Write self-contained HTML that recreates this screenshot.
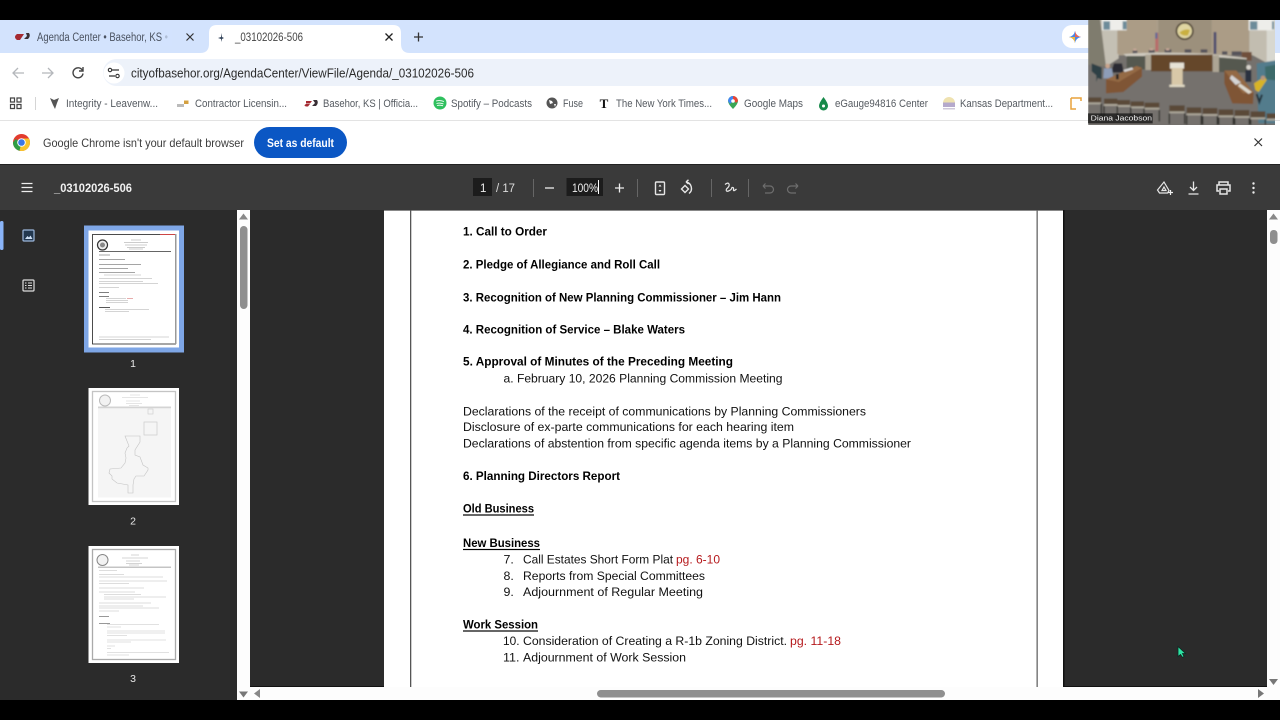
<!DOCTYPE html>
<html><head><meta charset="utf-8"><title>_03102026-506</title>
<style>
html,body{margin:0;padding:0;background:#000;width:1280px;height:720px;overflow:hidden}
svg{display:block;position:absolute;left:0;top:0}
#root{filter:blur(.3px)}
text{font-family:"Liberation Sans",sans-serif}
.t{font-size:11px;fill:#555a60}
.d{font-size:12.4px;fill:#111}
.b{font-size:12.4px;fill:#000;font-weight:bold}
.r{font-size:12.4px;fill:#b5191c}
.i{fill:none;stroke:#e6e6e6;stroke-width:1.4}
.l{stroke:#888;stroke-width:.7}
.m{stroke:#bbb;stroke-width:.6}
</style></head><body>
<svg id="root" width="1280" height="720" viewBox="0 0 1280 720" xmlns="http://www.w3.org/2000/svg">
<defs>
<filter id="bl" x="-5%" y="-5%" width="110%" height="110%"><feGaussianBlur stdDeviation="2"/></filter>
<filter id="th" x="-5%" y="-5%" width="110%" height="110%"><feGaussianBlur stdDeviation=".35"/></filter>
</defs>
<rect width="1280" height="720" fill="#000"/>
<!-- tab strip -->
<rect y="20" width="1280" height="33" fill="#d3e3fd"/>
<path d="M200 53q9 0 9-9V33q0-8 8-8h176q8 0 8 8v11q0 9 9 9z" fill="#fff"/>
<path d="M17 34h7l-2 3h-5zM17 37h5l-2 3h-3q-4-3 0-6z" fill="#a52a32"/><path d="M26 33h3q2 3-1 6h-4l3-3z" fill="#3a3036"/>
<text x="37" y="41" class="t" style="fill:#4a5260;font-size:11.5px" textLength="131" lengthAdjust="spacingAndGlyphs">Agenda Center • Basehor, KS •</text>
<rect x="162" y="28" width="10" height="18" fill="#d3e3fd" opacity=".75"/>
<path d="M186.500 33.500l7 7m0-7l-7 7" stroke="#333" stroke-width="1.200"/>
<path d="M222 33l-1 4-3 1 3 1 1 3 0-3 2-1-2-1z" fill="#33445a"/>
<text x="235" y="41" class="t" style="fill:#444;font-size:11.5px" textLength="68" lengthAdjust="spacingAndGlyphs">_03102026-506</text>
<path d="M385.500 33.500l7 7m0-7l-7 7" stroke="#222" stroke-width="1.300"/>
<path d="M418.500 32.500v9m-4.500-4.500h9" stroke="#333" stroke-width="1.300"/>
<rect x="1062" y="25" width="40" height="23" rx="10" fill="#fff"/>
<path d="M1075 31q1 5 6 6q-5 1-6 6q-1-5-6-6q5-1 6-6z" fill="#4a86e8"/>
<path d="M1075 31q1 5 6 6h-6z" fill="#e6655a"/>
<path d="M1075 43q-1-5-6-6h6z" fill="#f0b840"/>
<!-- toolbar -->
<rect y="53" width="1280" height="67" fill="#fff"/>
<rect x="103" y="59" width="1100" height="27" rx="13.500" fill="#edf2fa"/>
<path d="M24 73H13m5-5l-5 5 5 5" fill="none" stroke="#b4b7bb" stroke-width="1.300"/>
<path d="M42 73h11m-5-5l5 5-5 5" fill="none" stroke="#b4b7bb" stroke-width="1.300"/>
<path d="M82.500 70.500a5 5 0 1 0 .5 3M83 67v4h-4" fill="none" stroke="#444" stroke-width="1.400"/>
<circle cx="114" cy="73" r="10.500" fill="#fff"/>
<path d="M112 70h7M109 76h6" stroke="#333" stroke-width="1.200"/><circle cx="110" cy="70" r="1.700" fill="none" stroke="#333" stroke-width="1.100"/><circle cx="117.500" cy="76" r="1.700" fill="none" stroke="#333" stroke-width="1.100"/>
<text x="131" y="77.500" style="font-size:12.500px;fill:#2b2b2b" textLength="343" lengthAdjust="spacingAndGlyphs">cityofbasehor.org/AgendaCenter/ViewFile/Agenda/_03102026-506</text>
<!-- bookmarks -->
<rect y="120" width="1280" height="1" fill="#e3e3e3"/>
<path d="M10.500 98h4v4h-4zM17 98h4v4h-4zM10.500 104.500h4v4h-4zM17 104.500h4v4h-4z" fill="none" stroke="#444" stroke-width="1.200"/>
<rect x="35" y="97" width="1" height="13" fill="#d5d5d5"/>
<path d="M50 98l4 2 5-2-2 5-2 6-2-4z" fill="#555"/>
<text x="66" y="107" class="t" textLength="92" lengthAdjust="spacingAndGlyphs">Integrity - Leavenw...</text>
<path d="M177 104h7v3h-7z" fill="#bbb"/><rect x="184" y="100.500" width="4.500" height="3.500" fill="#d4a040"/>
<text x="195" y="107" class="t" textLength="92" lengthAdjust="spacingAndGlyphs">Contractor Licensin...</text>
<path d="M306 101h6l-2 2.500h-4zM306 104h4l-2 2.500h-2q-3-1 0-2.500z" fill="#a52a32"/><path d="M313 100h4q2 3-1 6h-4l3-3z" fill="#3a3036"/>
<text x="323" y="107" class="t" textLength="95" lengthAdjust="spacingAndGlyphs">Basehor, KS | Officia...</text>
<circle cx="440" cy="103" r="6.500" fill="#2fc05e"/><path d="M436 101q4-1 8 .5M436.500 103.500q3.500-1 7 .5M437 105.500q3-.8 6 .3" stroke="#fff" stroke-width=".9" fill="none"/>
<text x="451" y="107" class="t" textLength="81" lengthAdjust="spacingAndGlyphs">Spotify – Podcasts</text>
<circle cx="552" cy="103" r="5.500" fill="#555"/><path d="M549 100l3 1 1 2-3 1zM554 104l2 0-1 3z" fill="#fff"/>
<text x="563" y="107" class="t" textLength="20" lengthAdjust="spacingAndGlyphs">Fuse</text>
<text x="604" y="108" text-anchor="middle" style="font-family:'Liberation Serif',serif;font-size:13px;font-weight:bold;fill:#111">T</text>
<text x="616" y="107" class="t" textLength="96" lengthAdjust="spacingAndGlyphs">The New York Times...</text>
<path d="M733 109q-5-5-5-8a5 5 0 0 1 10 0q0 3-5 8z" fill="#3aa757"/><path d="M728 101a5 5 0 0 1 5-5l3 2-6 6z" fill="#4285f4"/><path d="M733 96a5 5 0 0 1 5 5l-2 2-3-4z" fill="#ea4335"/><circle cx="733" cy="101" r="1.800" fill="#fff"/>
<text x="744" y="107" class="t" textLength="59" lengthAdjust="spacingAndGlyphs">Google Maps</text>
<path d="M823.500 97q4.500 6 4.500 9a4.500 4.500 0 0 1-9 0q0-3 4.500-9z" fill="#178a4a"/><circle cx="823.500" cy="106" r="1.500" fill="#fff"/>
<text x="835" y="107" class="t" textLength="93" lengthAdjust="spacingAndGlyphs">eGauge94816 Center</text>
<path d="M943 103a6 6 0 0 1 12 0" fill="#efe2b0"/><rect x="943" y="102.500" width="12" height="4.500" fill="#b5a9cc"/><rect x="943" y="108" width="12" height="1.500" fill="#cfc8da"/>
<text x="960" y="107" class="t" textLength="93" lengthAdjust="spacingAndGlyphs">Kansas Department...</text>
<path d="M1071 98h10v3m-10-3v11h5" fill="none" stroke="#e8a23c" stroke-width="1.500"/>
<!-- infobar -->
<rect y="121" width="1280" height="43" fill="#fff"/>
<circle cx="21.500" cy="142.500" r="8.500" fill="#e33b2e"/>
<path d="M13 142.500a8.500 8.500 0 0 0 6.500 8.300l4-7-2-1.300-6-3.500z" fill="#2f9e44"/>
<path d="M21.500 142.500l-2 8.300a8.500 8.500 0 0 0 10.500-8.300q0-2-1-4h-7.500z" fill="#f7c52d"/>
<circle cx="21.500" cy="142.500" r="4.300" fill="#fff"/><circle cx="21.500" cy="142.500" r="3.300" fill="#3b78e7"/>
<text x="43" y="147" style="font-size:12px;fill:#3c3c3c" textLength="201" lengthAdjust="spacingAndGlyphs">Google Chrome isn't your default browser</text>
<rect x="254" y="127" width="93" height="31" rx="15.500" fill="#0b57c4"/>
<text x="267" y="147" style="font-size:11.500px;fill:#fff;font-weight:bold" textLength="67" lengthAdjust="spacingAndGlyphs">Set as default</text>
<path d="M1254.500 138.500l7.500 7.500m0-7.500l-7.500 7.500" stroke="#333" stroke-width="1.200"/>
<!-- pdf toolbar -->
<rect y="164" width="1280" height="46" fill="#3a3a3a"/>
<rect y="164" width="1280" height="1" fill="#222"/>
<path d="M21.500 183.500h11M21.500 187.500h11M21.500 191.500h11" stroke="#eee" stroke-width="1.200"/>
<text x="54" y="192" style="font-size:11.500px;fill:#f0f0f0;font-weight:bold" textLength="78" lengthAdjust="spacingAndGlyphs">_03102026-506</text>
<rect x="473" y="178" width="19" height="18" fill="#1c1c1c"/>
<text x="480" y="192" style="font-size:11.500px;fill:#eee">1</text>
<text x="496" y="192" style="font-size:11.500px;fill:#ddd" textLength="19" lengthAdjust="spacingAndGlyphs">/ 17</text>
<rect x="533" y="179" width="1" height="18" fill="#666"/>
<path d="M545 188h9" stroke="#eee" stroke-width="1.300"/>
<rect x="566.500" y="178" width="36.500" height="18" fill="#1c1c1c"/>
<text x="572" y="192" style="font-size:11.500px;fill:#eee" textLength="26" lengthAdjust="spacingAndGlyphs">100%</text>
<rect x="598" y="180" width="1" height="14" fill="#fff"/>
<path d="M615 188h9m-4.500-4.500v9" stroke="#eee" stroke-width="1.300"/>
<rect x="637" y="179" width="1" height="18" fill="#666"/>
<rect x="655.500" y="182" width="9" height="12.500" rx="1" class="i"/><path d="M660 184.500l-1.500 2h3zM660 192l-1.500-2h3z" fill="#eee"/>
<path d="M681.500 189l3.500-3.500 3.500 3.500-3.500 3.500z" class="i"/><path d="M686 182a6.500 6.500 0 0 1 3 11.500M686 182l2.500-2.200M686 182l2.500 2" class="i"/>
<rect x="711" y="179" width="1" height="18" fill="#666"/>
<path d="M725 184.500q3-2.500 4-.5t-2.500 5q-1 3 2 2t3.500-3.500q2-.5 1.500 2t3-.5" class="i" style="stroke-width:1.200"/>
<rect x="748" y="179" width="1" height="18" fill="#666"/>
<path d="M763 186h7a3.500 3.500 0 0 1 0 7h-5M763 186l2.500-2.500M763 186l2.500 2.500" class="i" style="stroke:#6e6e6e;stroke-width:1.200"/>
<path d="M798 186h-7a3.500 3.500 0 0 0 0 7h5M798 186l-2.500-2.500M798 186l-2.500 2.500" class="i" style="stroke:#6e6e6e;stroke-width:1.200"/>
<path d="M1164 182l5 8.500-1.500 2.500h-8l-2-3zM1164 187l2 3.500h-4z" class="i" style="stroke-width:1.200"/><path d="M1168 192.500h5m-2.500-2.500v5" stroke="#eee" stroke-width="1.200"/>
<path d="M1193.500 181.500v9m-3.500-3.500l3.500 3.500 3.500-3.500M1188.500 194h10" class="i" style="stroke-width:1.300"/>
<path d="M1219 185v-3h9v3M1219 191h-2v-6h13v6h-2M1220 189h7v5h-7z" class="i" style="stroke-width:1.500"/>
<circle cx="1253.500" cy="183.500" r="1.200" fill="#eee"/><circle cx="1253.500" cy="188" r="1.200" fill="#eee"/><circle cx="1253.500" cy="192.500" r="1.200" fill="#eee"/>
<!-- main -->
<rect y="210" width="1280" height="490" fill="#2b2b2b"/>
<rect x="0" y="221" width="3.500" height="29" rx="1.500" fill="#8ab4f8"/>
<rect x="23" y="230" width="11" height="11" rx="1" fill="#23384f" stroke="#9db8dc" stroke-width="1.200"/><path d="M25 239l2.500-3 1.500 1.500 1.500-2 2 3.500z" fill="#cfe0f5"/>
<rect x="23" y="280" width="11" height="11" rx="1" fill="none" stroke="#ddd" stroke-width="1.200"/><path d="M25 283h1.500M28 283h4M25 285.500h1.500M28 285.500h4M25 288h1.500M28 288h4" stroke="#ddd"/>
<!-- thumb 1 -->
<rect x="84" y="225.500" width="100" height="127" fill="#7ea6e6"/>
<rect x="88.500" y="230.500" width="90.500" height="117" fill="#fff"/>
<g filter="url(#th)">
<rect x="92.500" y="234.500" width="83" height="109.500" fill="none" stroke="#222" stroke-width=".8"/>
<rect x="175" y="234" width="1.500" height="110" fill="#999"/>
<rect x="160" y="234" width="15" height="1" fill="#c44"/>
<circle cx="102.500" cy="245" r="5" fill="#eee" stroke="#333" stroke-width="1.200"/><circle cx="102.500" cy="245" r="2.500" fill="#888"/>
<path d="M131 240h10M124 242.500h24M125 245h22M127 247.500h18M129 249h14" class="m" style="stroke:#999"/>
<path d="M99 251.500h72" stroke="#333" stroke-width=".8"/>
<path d="M99 255h11M99 259.500h26M99 264.500h42M99 268.500h29M99 272.500h36" class="l"/>
<path d="M104 275h37M99 278.500h53M99 281.500h44M99 283.500h59M99 287.500h20" class="m" style="stroke:#aaa"/>
<path d="M99 292.500h10M99 296.500h10" stroke="#555" stroke-width=".8"/>
<path d="M106 298.500h20M106 300.500h22M106 302.500h22" class="m" style="stroke:#aaa"/>
<path d="M127 298.500h6" stroke="#d88" stroke-width=".7"/>
<path d="M99 307.500h11" stroke="#444" stroke-width=".9"/>
<path d="M105 309.500h44M105 311.500h24M99 337h70M99 339.500h52" class="m" style="stroke:#aaa"/>
</g>
<text x="133" y="367" text-anchor="middle" style="font-size:10.500px;fill:#e8e8e8">1</text>
<!-- thumb 2 -->
<rect x="88.500" y="388" width="90.500" height="117" fill="#fff"/>
<g filter="url(#th)">
<rect x="92.500" y="391.500" width="83" height="110" fill="none" stroke="#c4c4c4" stroke-width="1.300"/>
<circle cx="105" cy="400.500" r="5.500" fill="#f2f2f2" stroke="#bbb" stroke-width="1"/>
<path d="M130 395h10M122 397.500h26M126 401h14M126 403.500h16M129 405.500h10" class="m" style="stroke:#ccc"/>
<rect x="98" y="406.500" width="73" height="1.800" fill="#d4d4d4"/>
<rect x="98" y="408.500" width="73" height="89" fill="#f5f5f5"/>
<rect x="148" y="409" width="5" height="5" fill="none" stroke="#ccc" stroke-width=".6"/>
<rect x="144" y="422" width="13" height="13" fill="none" stroke="#ccc" stroke-width=".7"/>
<path d="M125 436h15v6l-5 8v5l5 2 3 8 5 3v2l-4 6h-8l-2 3-1 6v8h-5v-8l-11-2-5-4 0-3-3-3 1-4 11-1 4-5 1-5-1-5 2-5 2-2z" fill="none" stroke="#c4c4c4" stroke-width=".6"/>
</g>
<text x="133" y="524.500" text-anchor="middle" style="font-size:10.500px;fill:#e8e8e8">2</text>
<!-- thumb 3 -->
<rect x="88.500" y="546" width="90.500" height="117" fill="#fff"/>
<g filter="url(#th)">
<rect x="92.500" y="549.500" width="83" height="110" fill="none" stroke="#aaa" stroke-width="1.300"/>
<circle cx="102.500" cy="560" r="5.500" fill="#f2f2f2" stroke="#888" stroke-width="1"/>
<path d="M131 555h8M122 558h26M126 561h14M126 563.500h16M129 565h10" class="m" style="stroke:#aaa"/>
<rect x="98" y="566.500" width="73" height="1.500" fill="#c4c4c4"/>
<path d="M99 570.500h18M99 574.500h25M99 577h64M99 581h68M99 583.500h30M99 588h45M99 592h36M104 594.500h37M104 597h62M104 599h30M99 603h52M99 606h44M99 608h60M99 611h20" class="m" style="stroke:#bbb"/>
<path d="M99 616.500h10M99 623.500h11" stroke="#777" stroke-width=".8"/>
<path d="M107 624.500h52M107 627h14M107 631h58M107 633h58M107 635.500h20M107 640h59M107 642h24M107 646h8M107 648.500h4M107 652.500h62M107 655h22" class="m" style="stroke:#c4c4c4"/>
</g>
<text x="133" y="682" text-anchor="middle" style="font-size:10.500px;fill:#e8e8e8">3</text>
<!-- sidebar scrollbar -->
<rect x="237" y="210" width="13" height="490" fill="#fdfdfd"/>
<path d="M243.500 213.500l4.500 6h-9z" fill="#888"/>
<rect x="240" y="226" width="7.500" height="83" rx="3.700" fill="#8f8f8f"/>
<path d="M243.500 697.500l4.500-6h-9z" fill="#777"/>
<!-- page -->
<rect x="384" y="210" width="680" height="477" fill="#fff"/>
<rect x="384" y="210" width="680" height="1" fill="#888"/>
<rect x="410" y="210" width="1.300" height="477" fill="#555"/>
<rect x="1036.500" y="210" width="1.300" height="477" fill="#666"/>
<rect x="1063" y="210" width="1.500" height="477" fill="#111"/>
<rect x="250" y="686" width="134" height="1.500" fill="#111"/>
<rect x="1064" y="686" width="203" height="1.500" fill="#111"/>
<g transform="translate(0,-.6)">
<text x="463" y="236" class="b" textLength="84" lengthAdjust="spacingAndGlyphs">1. Call to Order</text>
<text x="463" y="269" class="b" textLength="197" lengthAdjust="spacingAndGlyphs">2. Pledge of Allegiance and Roll Call</text>
<text x="463" y="302" class="b" textLength="318" lengthAdjust="spacingAndGlyphs">3. Recognition of New Planning Commissioner – Jim Hann</text>
<text x="463" y="334" class="b" textLength="222" lengthAdjust="spacingAndGlyphs">4. Recognition of Service – Blake Waters</text>
<text x="463" y="366" class="b" textLength="270" lengthAdjust="spacingAndGlyphs">5. Approval of Minutes of the Preceding Meeting</text>
<text x="503.500" y="383" class="d" textLength="279" lengthAdjust="spacingAndGlyphs">a. February 10, 2026 Planning Commission Meeting</text>
<text x="463" y="416" class="d" textLength="403" lengthAdjust="spacingAndGlyphs">Declarations of the receipt of communications by Planning Commissioners</text>
<text x="463" y="431.500" class="d" textLength="331" lengthAdjust="spacingAndGlyphs">Disclosure of ex-parte communications for each hearing item</text>
<text x="463" y="448" class="d" textLength="448" lengthAdjust="spacingAndGlyphs">Declarations of abstention from specific agenda items by a Planning Commissioner</text>
<text x="463" y="480.500" class="b" textLength="157" lengthAdjust="spacingAndGlyphs">6. Planning Directors Report</text>
<text x="463" y="513" class="b" textLength="71" lengthAdjust="spacingAndGlyphs">Old Business</text><rect x="463" y="515" width="71" height="1.200" fill="#000"/>
<text x="463" y="547.500" class="b" textLength="77" lengthAdjust="spacingAndGlyphs">New Business</text><rect x="463" y="549.500" width="77" height="1.200" fill="#000"/>
<text x="503.500" y="564" class="d">7.</text>
<text x="523" y="564" class="d" textLength="150" lengthAdjust="spacingAndGlyphs">Call Estates Short Form Plat</text>
<text x="676" y="564" class="r" textLength="44" lengthAdjust="spacingAndGlyphs">pg. 6-10</text>
<text x="503.500" y="580.500" class="d">8.</text>
<text x="523" y="580.500" class="d" textLength="182" lengthAdjust="spacingAndGlyphs">Reports from Special Committees</text>
<text x="503.500" y="596.500" class="d">9.</text>
<text x="523" y="596.500" class="d" textLength="180" lengthAdjust="spacingAndGlyphs">Adjournment of Regular Meeting</text>
<text x="463" y="629" class="b" textLength="75" lengthAdjust="spacingAndGlyphs">Work Session</text><rect x="463" y="631" width="75" height="1.200" fill="#000"/>
<text x="503" y="645.500" class="d" textLength="16.500" lengthAdjust="spacingAndGlyphs">10.</text>
<text x="523" y="645.500" class="d" textLength="264" lengthAdjust="spacingAndGlyphs">Consideration of Creating a R-1b Zoning District.</text>
<text x="790" y="645.500" class="r" textLength="51" lengthAdjust="spacingAndGlyphs">pg. 11-18</text>
<text x="503" y="662" class="d" textLength="16.500" lengthAdjust="spacingAndGlyphs">11.</text>
<text x="523" y="662" class="d" textLength="163" lengthAdjust="spacingAndGlyphs">Adjournment of Work Session</text>
</g>
<!-- right scrollbar -->
<rect x="1267" y="210" width="13" height="490" fill="#fdfdfd"/>
<path d="M1273.500 213.500l4.500 6h-9z" fill="#888"/>
<rect x="1270" y="230" width="7.500" height="14" rx="3.500" fill="#8f8f8f"/>
<path d="M1273.500 685l4.500-6h-9z" fill="#777"/>
<!-- h scrollbar -->
<rect x="250" y="687" width="1017" height="13" fill="#fdfdfd"/>
<path d="M254 693.500l6-4.500v9z" fill="#888"/>
<rect x="597" y="690" width="348" height="7.500" rx="3.700" fill="#8f8f8f"/>
<path d="M1264 693.500l-6-4.500v9z" fill="#777"/>
<!-- cursor -->
<path d="M1178 646.500v10l2.500-2 2 3 1.500-1-1.500-3h3z" fill="#2fe3a4" stroke="#0a2a22" stroke-width=".8"/>
<!-- webcam -->
<svg x="1088" y="20" width="187" height="105" viewBox="-6 0 561 315">
<g filter="url(#bl)">
<rect x="-6" y="-6" width="573" height="330" fill="#74716d"/>
<rect x="-6" y="-6" width="573" height="112" fill="#ab9f8b"/>
<path d="M-6 -6h44l12 146-56-6z" fill="#7f7b6e"/>
<path d="M30 -6h52l4 121-38 25z" fill="#c4c0b4"/>
<rect x="82" y="-6" width="118" height="108" fill="#ab9c86"/>
<rect x="205" y="-6" width="160" height="104" fill="#9c907c"/>
<rect x="366" y="-6" width="112" height="104" fill="#ab9c86"/>
<path d="M478 -6h60l-5 136-55-30z" fill="#c2bdb0"/>
<path d="M530 -6h37v136l-37-5z" fill="#d8d8d0"/>
<rect x="36" y="-6" width="74" height="37" fill="#eeeeea"/><rect x="40" y="4" width="20" height="25" fill="#6d8c9a"/><rect x="98" y="4" width="12" height="24" fill="#6d8c9a"/>
<rect x="476" y="-6" width="76" height="37" fill="#eeeeea"/><rect x="480" y="4" width="22" height="25" fill="#6d8c9a"/><rect x="546" y="4" width="6" height="24" fill="#6d8c9a"/>
<circle cx="284" cy="33" r="27" fill="#4c4032"/><circle cx="284" cy="33" r="22" fill="#e0d6a2"/><path d="M268 38q16-14 32-8l-6 16q-16 4-26-8z" fill="#c9b040"/>
<rect x="196" y="38" width="9" height="56" fill="#b86a6a"/><rect x="196" y="38" width="6" height="18" fill="#5a6a9a"/>
<rect x="371" y="36" width="8" height="66" fill="#4e4e6e"/>
<path d="M128 92h14v8h-14zM176 90h18v10h-18zM224 88h20v10h-20zM284 88h20v10h-20zM332 88h20v10h-20zM396 94h16v10h-16zM425 94h30v12h-30z" fill="#55525a"/>
<path d="M179 85h10v6h-10zM228 85h10v6h-10zM130 86h9v6h-9z" fill="#c8a898"/>
<path d="M455 96h30v26h-30z" fill="#6f4f3a"/>
<path d="M100 102q190-12 370 12v6q-180-20-360-10z" fill="#cfcabf"/>
<path d="M110 108h56v40h-56z" fill="#555850"/><rect x="166" y="104" width="17" height="46" fill="#ada594"/>
<rect x="183" y="104" width="185" height="50" fill="#65462c"/><rect x="368" y="106" width="19" height="50" fill="#ada594"/>
<path d="M387 112l83 6v40l-83-2z" fill="#555850"/>
<path d="M500 130l67-10v190h-62z" fill="#527c8c"/>
<path d="M5 130l30 12v36l-12-4-4 12v-20l-14-12z" fill="#2f3f45"/>
<path d="M525 140l42-8v50l-40-4z" fill="#3e6a6a"/>
<path d="M72 130h24l6 28h-40z" fill="#2c2c32"/>
<path d="M42 145h24l4 30h-30z" fill="#8d9db8"/><circle cx="53" cy="138" r="7" fill="#c9a68e"/>
<path d="M48 178l92-40 16 6v26l-56 46-52 4z" fill="#7f5435"/><path d="M48 178l92-40 16 6-70 42z" fill="#946a44"/>
<path d="M78 162h8v16h-8z" fill="#222"/><path d="M100 150l26-8 4 6-26 8z" fill="#d8d8d8"/>
<path d="M403 152h36l52 66-2 34-62-2-24-60z" fill="#7f5435"/><path d="M403 152h36l52 66-32 2z" fill="#946a44"/>
<path d="M425 165l28 22-16 8-18-20z" fill="#d4d4d4"/><path d="M450 190l36 26-10 6-32-24z" fill="#dcd8ce"/>
<path d="M466 150h18v36h-18z" fill="#2c3240"/><circle cx="476" cy="142" r="7" fill="#d8d4cc"/>
<path d="M492 190l32-20 6 10-24 36-10-6z" fill="#d8b428"/><circle cx="519" cy="174" r="7" fill="#b8967c"/>
<path d="M500 222l8 24 8-22" fill="none" stroke="#24303a" stroke-width="6"/>
<rect x="240" y="128" width="42" height="18" fill="#e6e2d6"/><rect x="245" y="144" width="33" height="52" fill="#d8c8a8"/><rect x="238" y="194" width="46" height="7" fill="#e0d8c4"/>
<path d="M-6 232h40v16h-40zM42 236h40v16h-40zM82 240h38v16h-38zM122 244h40v16h-40zM164 248h44v16h-44zM238 256h46v18h-46zM290 262h44v18h-44zM338 264h44v18h-44zM386 268h44v18h-44zM434 270h44v18h-44zM482 274h44v18h-44zM530 280h37v16h-37z" fill="#5a4a38"/>
<path d="M-6 247h40v6h-40zM42 252h40v6h-40zM82 255h38v6h-38zM122 259h40v6h-40zM164 263h44v6h-44zM238 274h46v6h-46zM290 280h44v6h-44zM338 282h44v6h-44zM386 286h44v6h-44zM434 288h44v6h-44zM482 292h44v6h-44zM530 296h37v6h-37z" fill="#aaa598"/>
<path d="M34 250v42M42 258v40M82 258v44M122 262v38M162 266v34M208 270v34M238 280v32M284 280v32M290 286v28M334 286v28M338 288v26M382 288v26M386 292v22M430 292v22M434 294v20M478 294v20M482 298v16M526 298v16" stroke="#2f2d2a" stroke-width="4"/>
</g>
<path d="M-6 280h194v30h-194z" fill="#111" opacity=".72"/>
<text x="2" y="301" style="font-size:22px;fill:#f2f2f2" textLength="184" lengthAdjust="spacingAndGlyphs">Diana Jacobson</text>
</svg>
</svg>
</body></html>
